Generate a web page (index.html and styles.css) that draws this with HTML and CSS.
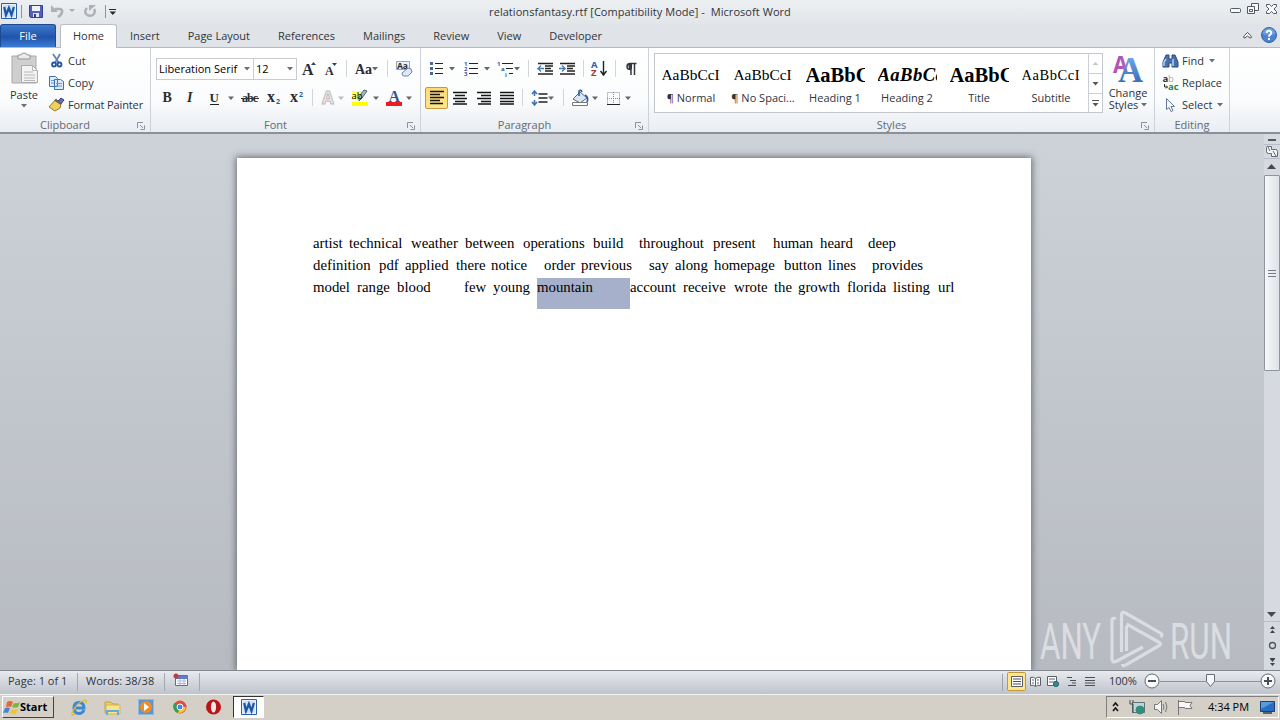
FILE: index.html
```html
<!DOCTYPE html>
<html lang="en">
<head>
<meta charset="utf-8">
<title>relationsfantasy.rtf - Microsoft Word</title>
<link rel="stylesheet" href="styles.css">
</head>
<body>
<svg width="0" height="0" class="defs">
  <defs>
    <linearGradient id="gb" x1="0" y1="0" x2="0" y2="1"><stop offset="0" stop-color="#7db4ec"/><stop offset="1" stop-color="#2c5fb3"/></linearGradient>
    <linearGradient id="gp" x1="0" y1="0" x2="1" y2="1"><stop offset="0" stop-color="#a84fc0"/><stop offset="1" stop-color="#b660a8"/></linearGradient>
    <symbol id="tri" viewBox="0 0 6 4"><path d="M0 0h6L3 3.5z" fill="#6b6f75"/></symbol>
    <symbol id="launch" viewBox="0 0 8 8"><path d="M.5 6V.5H6M3 3l3 3M7.5 3.5v4h-4" fill="none" stroke="#8c9299"/></symbol>
    <symbol id="word" viewBox="0 0 16 16"><path d="M.5.5h15v15H.5z" fill="#e9f2fb" stroke="#2b5fa8"/><path d="M2 2h12v12H2z" fill="#cfe1f5"/><path d="M3.200 4l1.800 8 2.900-7 2.600 7 2.400-8" fill="none" stroke="#1d57a5" stroke-width="2.300"/></symbol>
  </defs>
</svg>
<div class="screen">
  <header class="titlebar">
    <svg class="quick" width="122" height="24" viewBox="0 0 122 24">
      <use href="#word" x="1" y="3" width="16" height="16"/>
      <path d="M21.500 5v13M105.500 5v13" stroke="#8d9299"/>
      <path d="M29.500 5.500h13v12h-12l-1-1z" fill="#5560bd" stroke="#34409a"/><path d="M32 6h8v5h-8z" fill="#eef2fc"/><path d="M33 13h6v4h-6z" fill="#dfe3f3"/><path d="M34 14h2v3h-2z" fill="#333c8a"/>
      <path d="M55 9h4q4 0 3 3.500-1 3-4 4.500" fill="none" stroke="#adb0b4" stroke-width="2.600"/><path d="M51 5v7h7z" fill="#adb0b4"/>
      <path d="M69 9h6l-3 3z" fill="#a8abb0"/>
      <path d="M87 8q-3 3-1 6 3 3 7 1 3-3 1-6" fill="none" stroke="#adb0b4" stroke-width="2.400"/><path d="M89 5h7l-7 6z" fill="#adb0b4"/>
      <path d="M109 9.500h7" stroke="#26282b"/><path d="M109.500 11.500h6.500l-3.200 3.500z" fill="#26282b"/>
    </svg>
    <h1>relationsfantasy.rtf [Compatibility Mode] -&nbsp; Microsoft Word</h1>
    <svg class="winbtns" width="56" height="24" viewBox="1224 0 56 24" fill="#f6f8f9" stroke="#555b63">
      <rect x="1230.500" y="8.500" width="10" height="4" rx="1"/>
      <path d="M1251.500 3.500h7v7h-7z"/><path d="M1247.500 6.500h7v7h-7zM1249.500 9.500h3v2h-3z"/>
      <path d="M1266.500 4.500h3l2 2 2-2h3v2l-2.500 2.500 2.500 2.500v2h-3l-2-2-2 2h-3v-2l2.500-2.500-2.500-2.500z"/>
    </svg>
  </header>
  <nav class="tabs">
    <span class="tab file">File</span><span class="tab home">Home</span><span class="tab">Insert</span><span class="tab">Page Layout</span><span class="tab">References</span><span class="tab">Mailings</span><span class="tab">Review</span><span class="tab">View</span><span class="tab">Developer</span>
    <svg class="help" width="44" height="23" viewBox="1236 24 44 23"><path d="M1243.500 37q0-1 4-4.500 4 3.500 4 4.500t-1.500 1l-2.500-2-2.500 2q-1.500 0-1.500-1z" fill="#f6f8f9" stroke="#4b5058"/><circle cx="1269" cy="35" r="7.500" fill="#4c84d0" stroke="#2f62ac"/><path d="M1262.500 34a6.500 6 0 0 1 13 0q-6 2-13 0z" fill="#83b0e7" opacity=".6"/><path d="M1266.700 33q0-2.200 2.300-2.200t2.300 2q0 1.300-1.300 2-1 .6-1 1.900M1269 38v2" fill="none" stroke="#fff" stroke-width="1.900"/></svg>
  </nav>
  <section class="ribbon">
    <div class="group clipboard">
      <div class="body">
        <div class="paste"><svg width="32" height="36" viewBox="8 51 32 36"><path d="M12 56h24v27H12z" fill="#cfcfcf" stroke="#aaa"/><path d="M18 59v-4h3q0-2 3-2t3 2h3v4z" fill="#ececec" stroke="#999"/><path d="M21.500 65.500h11l5 5v12h-16z" fill="#f3f3f3" stroke="#aaa"/><path d="M32.500 65.500v5h5M24 72h9M24 75h11M24 78h11M24 80.500h11" fill="none" stroke="#b8b8b8"/></svg><span>Paste</span><svg class="arrow"><use href="#tri"/></svg></div>
        <div class="cmds">
          <div><svg width="18" height="18" viewBox="48 52 18 18"><path d="M53 54l6 9M60 54l-5 9" stroke="#6585ac" stroke-width="1.800"/><circle cx="54" cy="64.500" r="2" fill="none" stroke="#2755a5" stroke-width="1.800"/><circle cx="59.500" cy="64.500" r="2" fill="none" stroke="#2755a5" stroke-width="1.800"/></svg><span>Cut</span></div>
          <div><svg width="18" height="18" viewBox="48 74 18 18" fill="#dceafa" stroke="#3f72b5"><path d="M49.500 76.500h6l2 2v8h-8zM54.500 79.500h6l3 2v8h-9z"/><path d="M51 80.500h3M51 83h3M56 83.500h6M56 86h6" stroke="#6d99d0"/></svg><span>Copy</span></div>
          <div><svg width="18" height="18" viewBox="48 96 18 18"><path d="M61 98l3 2-4 5-3-3z" fill="#6a6fae" stroke="#373d71"/><path d="M56 99l5 5-1 4-5 3-6-4z" fill="#f0d05c" stroke="#9b7a28"/><path d="M55 100l6 4" stroke="#57606e" stroke-width="2"/></svg><span class="painter">Format Painter</span></div>
        </div>
      </div>
      <footer><span>Clipboard</span><svg class="launch"><use href="#launch"/></svg></footer>
    </div>
    <div class="group font">
      <div class="body rows">
        <div class="row">
          <div class="combo family"><span>Liberation Serif</span><svg class="arrow"><use href="#tri"/></svg></div><div class="combo size"><span>12</span><svg class="arrow"><use href="#tri"/></svg></div>
          <svg width="50" height="22" viewBox="297 58 50 22"><text x="302" y="75" class="serif b" font-size="16">A</text><path d="M311 65h5l-2.500-3z" fill="#345"/><text x="325" y="75" class="serif b" font-size="12">A</text><path d="M332 63h5l-2.500 3z" fill="#345"/><path d="M346.500 60v17" stroke="#d2d5d9"/></svg>
          <svg width="41" height="22" viewBox="347 58 41 22"><text x="355" y="74" class="serif b" font-size="14">Aa</text><path d="M372 67h6l-3 3.500z" fill="#666"/><path d="M387.500 60v17" stroke="#d2d5d9"/></svg>
          <svg width="30" height="22" viewBox="388 58 30 22"><path d="M396.500 61.500h13v8h-13z" fill="#e8f1fb" stroke="#93a4bb"/><text x="397" y="69" font-size="8.500" class="sans b">Aa</text><path d="M402 73l6-5q4 0 4 4l-4 4h-4q-2 0-2-3z" fill="#dbe9fa" stroke="#6b83aa"/></svg>
        </div>
        <div class="row">
          <svg width="82" height="22" viewBox="156 87 82 22"><text x="162.500" y="102" class="serif b" font-size="14">B</text><text x="187" y="102" class="serif bi" font-size="14">I</text><text x="209.500" y="102" class="serif b" font-size="13">U</text><path d="M210 104.500h9" stroke="#222"/><path d="M228 96.500h6l-3 3.500z" fill="#666"/></svg>
          <svg width="75" height="22" viewBox="238 87 75 22"><text x="242" y="102" class="serif b" font-size="12" textLength="16">abc</text><path d="M241 98.500h18" stroke="#333"/><text x="267" y="102" class="serif b" font-size="16">x</text><text x="276" y="104" class="sans num" font-size="7">2</text><text x="290" y="102" class="serif b" font-size="16">x</text><text x="299" y="97" class="sans num" font-size="7">2</text><path d="M312.500 89v17" stroke="#d2d5d9"/></svg>
          <svg width="34" height="22" viewBox="313 87 34 22"><text x="322" y="104" class="sans" font-size="17" font-weight="bold" fill="#eee" stroke="#bbb">A</text><path d="M338 96.500h6l-3 3.500z" fill="#bbb"/></svg>
          <svg width="35" height="22" viewBox="347 87 35 22"><path d="M352 91h10v9h-10z" fill="#ffff65"/><path d="M367 91l-5 7-3 3 0-4 5-7z" fill="#a9bad0" stroke="#4c607b"/><text x="351.500" y="99" class="sans" font-size="9.500">ab</text><path d="M352 102h16v4h-16z" fill="#ff0"/><path d="M373 96.500h6l-3 3.500z" fill="#666"/></svg>
          <svg width="35" height="22" viewBox="382 87 35 22"><text x="388.500" y="101.500" class="serif" font-size="16" font-weight="bold" fill="#35568a">A</text><path d="M386 102h16v4h-16z" fill="#ed1c24"/><path d="M406 96.500h6l-3 3.500z" fill="#666"/></svg>
        </div>
      </div>
      <footer><span>Font</span><svg class="launch"><use href="#launch"/></svg></footer>
    </div>
    <div class="group paragraph">
      <div class="body rows">
        <div class="row">
          <svg width="36" height="22" viewBox="425 58 36 22"><path d="M435 63.500h8M435 68.500h8M435 73.500h8" stroke="#222"/><path d="M430 62h3v3h-3zm0 5h3v3h-3zm0 5h3v3h-3z" fill="#47669c"/><path d="M449 67h6l-3 3.500z" fill="#666"/></svg>
          <svg width="35" height="22" viewBox="461 58 35 22"><path d="M469 63.500h9M469 68.500h9M469 73.500h9" stroke="#222"/><g class="sans num" font-size="6"><text x="464" y="66">1</text><text x="464" y="71">2</text><text x="464" y="76">3</text></g><path d="M484 67h6l-3 3.500z" fill="#666"/></svg>
          <svg width="35" height="22" viewBox="496 58 35 22"><path d="M502 63.500h11M506 68.500h7M509 73.500h4" stroke="#222"/><g class="sans num" font-size="6"><text x="497" y="66">1</text><text x="501" y="71">a</text><text x="505" y="77">i</text></g><path d="M514 67h6l-3 3.500z" fill="#666"/><path d="M528.500 60v17" stroke="#d2d5d9"/></svg>
          <svg width="54" height="22" viewBox="531 58 54 22"><path d="M538 63.500h15M545 66h8M545 68.500h6M545 71h8M538 74h15M560 63.500h15M567 66h8M567 68.500h6M567 71h8M560 74h15" stroke="#222" stroke-width="1.500"/><path d="M544 68.500h-6l3-3m-3 3l3 3M559 68.500h6l-3-3m3 3l-3 3" fill="none" stroke="#4779bd" stroke-width="1.300"/><path d="M583.500 60v17" stroke="#d2d5d9"/></svg>
          <svg width="58" height="22" viewBox="585 58 58 22"><text x="591" y="68" class="sans b num" font-size="9.500">A</text><text x="591" y="76" class="sans b red" font-size="9.500">Z</text><path d="M603.500 61v13m-3-3l3 4 3-4" fill="none" stroke="#222" stroke-width="1.400"/><path d="M615.500 60v17" stroke="#d2d5d9"/><path d="M636.500 63.500H630q-3 0-3 3t3 3h1v5.500M634.500 63.500V75" fill="none" stroke="#35393f" stroke-width="1.500"/><path d="M628 64h4v5h-3z" fill="#35393f"/></svg>
        </div>
        <div class="row">
          <span class="active"><svg width="23" height="20" viewBox="425 88 23 20"><path d="M430 91.500h14M430 94.500h10M430 97.500h14M430 100.500h10M430 103.500h13" stroke="#151515" stroke-width="1.400"/></svg></span>
          <svg width="77" height="22" viewBox="448 87 77 22"><path d="M453 92.500h14M455 95.500h10M453 98.500h14M455 101.500h10M453 104h14M477 92.500h14M481 95.500h10M477 98.500h14M481 101.500h10M478 104h13M500 92.500h14M500 95.500h14M500 98.500h14M500 101.500h14M500 104h14" stroke="#151515" stroke-width="1.400"/><path d="M522.500 89v17" stroke="#d2d5d9"/></svg>
          <svg width="40" height="22" viewBox="525 87 40 22"><path d="M538.500 94h9M538.500 98h9M538.500 102h9" stroke="#222" stroke-width="1.300"/><path d="M534.500 91v5m0 4v5m-2.500-11l2.500-3 2.500 3m-5 8l2.500 3 2.500-3" fill="none" stroke="#4574b3" stroke-width="1.600"/><path d="M548 96.500h6l-3 3.500z" fill="#666"/><path d="M563.500 89v17" stroke="#d2d5d9"/></svg>
          <svg width="70" height="22" viewBox="565 87 70 22"><path d="M573 99l7-7 7 6-7 5z" fill="#d9e7f5" stroke="#50698d"/><path d="M579 96v-5q2-2 3 1M585 95q4 2 2 7" fill="none" stroke="#315a98" stroke-width="1.600"/><path d="M572.500 102.500h15v3h-15z" fill="#fff" stroke="#777"/><path d="M592 96.500h6l-3 3.500z" fill="#666"/><path d="M607.500 92.500h12v12h-12zM613.500 92v12M607 98.500h13" fill="none" stroke="#889" stroke-dasharray="1 1"/><path d="M607 104.500h13" stroke="#222"/><path d="M625 96.500h6l-3 3.500z" fill="#666"/></svg>
        </div>
      </div>
      <footer><span>Paragraph</span><svg class="launch"><use href="#launch"/></svg></footer>
    </div>
    <div class="group styles">
      <div class="body">
        <div class="gallery">
          <div class="style"><b class="normal">AaBbCcI</b><span>¶ Normal</span></div>
          <div class="style"><b class="normal">AaBbCcI</b><span>¶ No Spaci...</span></div>
          <div class="style"><b class="h1">AaBbC</b><span>Heading 1</span></div>
          <div class="style"><b class="h2">AaBbCc</b><span>Heading 2</span></div>
          <div class="style"><b class="h1">AaBbC</b><span>Title</span></div>
          <div class="style"><b class="sub">AaBbCcI</b><span>Subtitle</span></div>
          <svg class="gscroll" width="14" height="58" viewBox="1088 54 14 58"><path d="M1088.500 54v58M1088 73.500h14M1088 93.500h14" stroke="#cbced2"/><path d="M1092.500 65h6l-3-3z" fill="#c4c7cb"/><path d="M1092.500 82h6l-3 3.500zM1092.500 103h6l-3 3.500z" fill="#555"/><path d="M1092 100.500h7" stroke="#555"/></svg>
        </div>
        <div class="change"><svg width="34" height="34" viewBox="1111 51 34 34"><text x="1113" y="73" class="sans" font-weight="bold" font-size="24" fill="url(#gp)" textLength="15" lengthAdjust="spacingAndGlyphs">A</text><text x="1118" y="82" class="serif" font-weight="bold" font-size="36" fill="url(#gb)" textLength="25" lengthAdjust="spacingAndGlyphs">A</text></svg><span>Change</span><span class="second">Styles<svg class="arrow"><use href="#tri"/></svg></span></div>
      </div>
      <footer><span>Styles</span><svg class="launch"><use href="#launch"/></svg></footer>
    </div>
    <div class="group editing">
      <div class="body cmds">
        <div><svg width="18" height="18" viewBox="1162 52 18 18"><path d="M1166 55h3v4h3v-4h3l3 7v5h-6v-4h-3v4h-6v-5z" fill="#4870ab" stroke="#294b82"/><path d="M1166 59l-2 3v4M1173 59v7" stroke="#b8d0f0" fill="none" stroke-width="1.500"/></svg><span>Find</span><svg class="arrow"><use href="#tri"/></svg></div>
        <div><svg width="18" height="18" viewBox="1162 74 18 18"><text x="1162.500" y="82" class="sans b" font-size="9.500">a</text><text x="1168" y="82" class="sans" font-size="9.500" fill="#aaa">b</text><text x="1168" y="90" class="sans" font-size="9.500" font-weight="bold" fill="#26824a">ac</text><path d="M1164.500 84v3h3m-1.500-1.500l1.500 1.500-1.500 1.500" fill="none" stroke="#333"/></svg><span>Replace</span></div>
        <div><svg width="18" height="18" viewBox="1162 96 18 18"><path d="M1166.500 98.500v11l2.500-2 2 4 2-1-2-4h3.500z" fill="#f4f8fd" stroke="#67799a"/></svg><span>Select</span><svg class="arrow"><use href="#tri"/></svg></div>
      </div>
      <footer class="plain"><span>Editing</span></footer>
    </div>
  </section>
  <main class="workspace">
    <article class="page">
      <p class="line l1"><span>artist</span><span>technical</span><span>weather</span><span>between</span><span>operations</span><span>build</span><span>throughout</span><span>present</span><span>human</span><span>heard</span><span>deep</span></p>
      <p class="line l2"><span>definition</span><span>pdf</span><span>applied</span><span>there</span><span>notice</span><span>order</span><span>previous</span><span>say</span><span>along</span><span>homepage</span><span>button</span><span>lines</span><span>provides</span></p>
      <p class="line l3"><span>model</span><span>range</span><span>blood</span><span>few</span><span>young</span><mark>mountain</mark><span>account</span><span>receive</span><span>wrote</span><span>the</span><span>growth</span><span>florida</span><span>listing</span><span>url</span></p>
    </article>
    <aside class="scroll">
      <svg width="16" height="41" viewBox="1264 134 16 41"><path d="M1268 140h8" stroke="#555b65" stroke-width="2"/><path d="M1264 144.500h16M1264 158.500h16" stroke="#b9bdc5"/><path d="M1266.500 147.500q0-2 2-1h3v3h4q2 0 2 2v5h-6v-3h-3q-2 0-2-2zM1268 147l2 4M1273 151l3 5" fill="#f4f5f7" stroke="#656b75"/><path d="M1267 169h9l-4.500-5z" fill="#444952"/></svg>
      <div class="thumb"><svg width="8" height="7"><path d="M0 .5h8M0 3.500h8M0 6.500h8" stroke="#777d87"/></svg></div>
      <svg class="navend" width="16" height="62" viewBox="1264 608 16 62"><path d="M1267 612h9l-4.500 5z" fill="#444952"/><path d="M1264 621.500h16" stroke="#b9bdc5"/><path d="M1270 629h5l-2.500-3zM1270 633h5l-2.500-3zM1270 659h5l-2.500 3zM1270 663h5l-2.500 3zM1270 658h5v1h-5z" fill="#3f444c"/><circle cx="1272.500" cy="645.500" r="3" fill="none" stroke="#50565f" stroke-width="1.300"/></svg>
    </aside>
    <svg class="watermark" width="196" height="64" viewBox="1038 608 196 64"><g class="wm" font-size="50"><text x="1040" y="659" textLength="61" lengthAdjust="spacingAndGlyphs">ANY</text><text x="1170" y="659" textLength="62" lengthAdjust="spacingAndGlyphs">RUN</text></g><path d="M1116 618.500q-4-1-4 2V659q0 4 4 2.500L1143 647M1121.500 652v-37q0-4 4-2l35 20q3 2 0 4M1126.500 624l32 18q4 2 0 4l-33 19q-3 2-3-1M1126.500 651v-25" fill="none" stroke="#f2f4f7" stroke-width="3.200" opacity=".6"/></svg>
  </main>
  <div class="status">
    <span class="cell c1">Page: 1 of 1</span><span class="cell c2">Words: 38/38</span><span class="cell c3"><svg width="18" height="16" viewBox="172 673 18 16"><path d="M175.500 675.500h12v10h-12z" fill="#fff" stroke="#596bb0"/><path d="M176 676h12v3h-12z" fill="#6679c4"/><path d="M177 681h9M177 683.500h9M180 679v6M184 679v6" stroke="#a9b5db"/><circle cx="176" cy="676" r="2.500" fill="#bb3f3a"/></svg></span>
    <svg class="views" width="106" height="24" viewBox="1000 671 106 24"><path d="M1002.500 674v17" stroke="#9ca0a8"/><rect x="1007.500" y="672.500" width="18" height="18" rx="1" fill="#ffe58c" stroke="#c4963a"/><path d="M1011.500 676.500h11v10h-11z" fill="#fff" stroke="#5c5d61"/><path d="M1013 679h8M1013 681.500h8M1013 684h8" stroke="#4b4f57"/><path d="M1030.500 677.500q3-1 5 1 2-2 5-1v8q-3-1-5 1-2-2-5-1zM1035.500 678v8" fill="#fff" stroke="#5b6068"/><path d="M1032 680h2M1032 683h2M1037 680h2M1037 683h2" stroke="#5b6068"/><path d="M1047.500 676.500h9v9h-9z" fill="#fff" stroke="#5b6068"/><path d="M1049 679h6M1049 682h6" stroke="#5b6068"/><circle cx="1056" cy="684" r="2.600" fill="#368c8b" stroke="#27607c"/><path d="M1067 677.500h5M1070 680.500h6M1072 683h4M1068 685.500h8M1085 677.500h10M1085 680.500h10M1085 683h10M1085 685.500h10" stroke="#4b4f57"/></svg>
    <span class="pct">100%</span>
    <svg width="138" height="24" viewBox="1142 671 138 24"><path d="M1160 681.500h101" stroke="#8e939b"/><circle cx="1152" cy="681" r="7" fill="#f8f9fa" stroke="#656a72"/><circle cx="1268" cy="681" r="7" fill="#f8f9fa" stroke="#656a72"/><path d="M1148 681h8M1264 681h8M1268 677v8" stroke="#4a4e55" stroke-width="2"/><path d="M1206.500 674.500h8v7l-4 5-4-5z" fill="#f6f7f9" stroke="#686d75"/></svg>
  </div>
  <footer class="taskbar">
    <div class="start"><svg width="17" height="17" viewBox="3 698 17 17"><path d="M7 701q3-2 6 0l-2 5q-2-1-5 0z" fill="#e5673a"/><path d="M14 702q3 1 6-1l-2 5q-3 1-6 0z" fill="#78b541"/><path d="M5 707q3-1 5 0l-2 5q-2-1-5 0z" fill="#4785cf"/><path d="M12 708q3 1 6 0l-2 5q-3 1-6-1z" fill="#f3c334"/></svg><span>Start</span></div>
    <svg class="apps" width="178" height="24" viewBox="54 696 178 24"><path d="M85 710q-1.500 3.500-5 3.500-5 0-5-5.500t5-5.500 5 5.500H77" fill="none" stroke="#3a8bd4" stroke-width="3"/><path d="M73 713q-1 3 3 1M73 713q5-11 13-13 2 0 1 3" fill="none" stroke="#e4b82c" stroke-width="1.200"/>
      <path d="M106 702h6l2 2h5v9h-13z" fill="#ebc963" stroke="#c2a246"/><path d="M107 705h14v9h-14z" fill="#f8e391" stroke="#d4b45c"/><path d="M108 715v-4h11v4" fill="none" stroke="#68abd3" stroke-width="2"/>
      <path d="M139.500 699.500h15v15h-15z" fill="#5797d5" stroke="#8fb9dd"/><circle cx="147" cy="707" r="6" fill="#f28b21"/><path d="M145 703l5 4-5 4z" fill="#fff"/>
      <circle cx="181" cy="707" r="6.500" fill="#e44b3b"/><path d="M181 707l-6-4a7 7 0 0 0 4 10z" fill="#2ba351"/><path d="M181 707h6a7 7 0 0 1-8 6z" fill="#f6c72c"/><circle cx="181" cy="707" r="3" fill="#4687e2" stroke="#fff"/>
      <circle cx="214.500" cy="707" r="7.500" fill="#b91519"/><ellipse cx="214.500" cy="707" rx="2.600" ry="5.500" fill="#f0e9e5"/></svg>
    <div class="running"><svg width="16" height="16"><use href="#word"/></svg></div>
    <div class="tray"><svg width="88" height="20" viewBox="1107 697 88 20"><path d="M1113 706l2.500-3 2.500 3M1113 711l2.500-3 2.500 3" fill="none" stroke="#151515" stroke-width="1.600"/><path d="M1132.500 702.500h12v10h-12z" fill="#b7d8db" stroke="#637176"/><path d="M1130 700v4h3v9M1133 700v3" stroke="#484848" fill="none"/><circle cx="1140" cy="710" r="4" fill="#299479" stroke="#4d7d80"/><path d="M1154.500 704.500h3l4-4v13l-4-4h-3z" fill="#f5f5f5" stroke="#777"/><path d="M1163 704q2 3 0 6M1165.500 702q3 5 0 10" fill="none" stroke="#777"/><path d="M1178.500 700v15M1179 701.500h5l2 1h6l-2 3 2 3h-6l-2-1h-5" fill="#f8f8f8" stroke="#777"/></svg><time>4:34 PM</time><svg width="18" height="18" viewBox="1260 698 18 18"><path d="M1261.500 701.500h14v10h-14z" fill="#286dc0" stroke="#194178"/><path d="M1262 702h13l-13 7z" fill="#5999de"/><path d="M1264 713h9" stroke="#59616d" stroke-width="2"/></svg></div>
  </footer>
</div>
</body>
</html>
```

FILE: styles.css
```css
* { box-sizing: border-box; }
body { margin: 0; font: 11px/14px "Open Sans", "Noto Sans", sans-serif; color: #30343a; }
svg { display: block; flex: none; }
.defs { position: absolute; }
.screen { width: 1280px; height: 720px; overflow: hidden; display: flex; flex-direction: column; background: #dfe3e6; white-space: nowrap; }
.titlebar { height: 24px; display: grid; grid-template-columns: 1fr 304px 1fr; align-items: center; background: linear-gradient(#edf0f3, #e2e6e9); }
.titlebar h1 { margin: 0; font-size: 11px; font-weight: 400; letter-spacing: .05px; text-align: center; }
.winbtns { justify-self: end; }
.tabs { height: 24px; display: flex; align-items: stretch; background: #e0e4e8; border-bottom: 1px solid #b5bac1; }
.tab { padding: 5px 14px 0; }
.file { width: 56px; padding: 4px 0 0; text-align: center; color: #fff; background: linear-gradient(#3d78cb, #2054ac 55%, #3b7cd4); border: 1px solid #1e4a94; border-bottom: 0; border-radius: 3px 3px 0 0; }
.home { width: 57px; height: 24px; margin: 0 -1px 0 4px; padding: 4px 0 0; text-align: center; background: #fff; border: 1px solid #b9bec5; border-bottom: 0; border-radius: 3px 3px 0 0; }
.help { margin-left: auto; }
.ribbon { height: 86px; display: flex; background: linear-gradient(#fff, #fbfcfd 60%, #e9edf2); border-bottom: 2px solid #8b9098; }
.group { display: flex; flex-direction: column; border-right: 1px solid #cdd2d9; }
.clipboard { width: 151px; }
.font { width: 270px; }
.paragraph { width: 228px; }
.styles { width: 506px; }
.editing { width: 75px; }
.body { height: 69px; display: flex; }
.group footer { display: grid; grid-template-columns: 1fr 13px; color: #646a73; text-align: center; line-height: 15px; }
.group footer span { padding-right: 7px; }
.group .plain { grid-template-columns: 1fr; }
.group .plain span { padding: 0; }
.launch { width: 8px; height: 8px; margin-top: 5px; }
.arrow { width: 6px; height: 4px; }
.paste { width: 48px; display: flex; flex-direction: column; align-items: center; padding-top: 3px; }
.paste span { margin: 1px 0 2px; }
.painter { letter-spacing: -.12px; }
.cmds { display: flex; flex-direction: column; gap: 4px; padding-top: 4px; }
.cmds > div { display: flex; align-items: center; height: 18px; gap: 2px; }
.cmds .arrow { margin-left: 3px; }
.editing .cmds, .editing .body { padding-left: 7px; }
.rows { flex-direction: column; gap: 7px; padding: 10px 0 0 5px; }
.paragraph .rows { padding-left: 4px; }
.row { display: flex; height: 22px; }
.combo { height: 22px; border: 1px solid #c8ccd1; display: flex; align-items: center; justify-content: space-between; background: #fff; padding: 0 3px 0 2px; color: #000; }
.family { width: 98px; }
.size { width: 43px; border-left: 0; }
.active { width: 23px; height: 22px; border: 1px solid #c29a3e; border-radius: 2px; background: linear-gradient(#ffda72, #ffe589); display: flex; justify-content: center; }
.serif { font-family: "Liberation Serif", serif; }
.sans { font-family: "Open Sans", sans-serif; }
.b, .bi { font-weight: 700; fill: #2a2d31; }
.bi { font-style: italic; }
.num { fill: #2e5ba8; font-weight: 700; }
.red { fill: #a43b36; }
.styles .body { padding: 5px 0 0 5px; }
.gallery { width: 449px; height: 60px; display: flex; border: 1px solid #c3c7cc; background: #fff; }
.style { width: 72px; display: flex; flex-direction: column; align-items: center; padding-top: 9px; }
.style b { width: 59px; height: 24px; overflow: hidden; line-height: 24px; color: #000; font-family: "Liberation Serif", serif; }
.style span { margin-top: 4px; }
.style .normal { font-size: 15.400px; font-weight: 400; }
.h1 { font-size: 20.500px; }
.style .h2 { font-size: 18.700px; font-style: italic; letter-spacing: .4px; }
.style .sub { font-size: 14.500px; font-weight: 400; letter-spacing: .55px; }
.gscroll { margin-left: auto; }
.change { width: 50px; display: flex; flex-direction: column; align-items: center; margin-top: -2px; }
.change span { line-height: 13px; margin-top: 1px; }
.change .second { display: flex; align-items: center; gap: 3px; margin: -1px 0 0; }
.workspace { height: 536px; position: relative; display: flex; justify-content: space-between; background: linear-gradient(#cdd1d8, #b7bac1); }
.page { width: 794px; height: 512px; margin: 24px 0 0 237px; padding: 74px 0 0 76px; background: #fff; box-shadow: 0 0 7px 1px #666970; color: #000; font: 14.800px/22px "Liberation Serif", serif; clip-path: inset(-10px -10px 0); }
.line { margin: 0; height: 22px; display: grid; }
.l1 { grid-template-columns: 36px 62px 54px 58px 70px 46px 74px 60px 47px 48px 50px; }
.l2 { grid-template-columns: 66px 26px 51px 35px 53px 37px 68px 26px 39px 70px 44px 44px 60px; }
.l3 { grid-template-columns: 44px 40px 67px 29px 44px 93px 53px 51px 40px 24px 49px 46px 45px 20px; }
.line mark { height: 31px; margin-top: 2px; line-height: 18px; background: #a6b0cb; color: #000; }
.scroll { width: 16px; display: flex; flex-direction: column; background: #d6d9df; }
.thumb { height: 196px; border: 1px solid #8f959f; border-radius: 1px; background: linear-gradient(90deg, #f7f8fa, #dfe2e7); display: grid; place-items: center; }
.navend { margin-top: auto; }
.watermark { position: absolute; left: 1038px; top: 474px; }
.wm { font-family: Roboto, sans-serif; font-weight: 400; fill: #f2f4f7; opacity: .6; }
.status { height: 25px; display: flex; background: linear-gradient(#e7eaee, #bfc3cb); border-top: 1px solid #81868f; border-bottom: 1px solid #f2f2f0; line-height: 20px; }
.cell { border-right: 1px solid #a3a8b0; margin: 2px 0 3px; line-height: 16px; }
.c1 { width: 78px; padding-left: 8px; }
.c2 { width: 87px; padding-left: 8px; }
.c3 { width: 35px; padding-left: 7px; }
.views { margin-left: auto; }
.pct { width: 36px; padding-left: 3px; }
.taskbar { height: 25px; display: flex; background: #d4d0c8; }
.start { width: 52px; height: 22px; margin: 1px 0 0 2px; border: 1px solid; border-color: #fff #444 #444 #fff; display: flex; align-items: center; color: #000; font: bold 11px/18px "Open Sans", sans-serif; }
.apps { margin: 1px 0 0 -1px; }
.running { width: 31px; height: 22px; margin: 1px 0 0 2px; display: grid; place-items: center; background: #fff; border: 1px solid; border-color: #333 #fff #fff #333; }
.tray { width: 173px; height: 22px; margin: 1px 1px 0 auto; border: 1px solid; border-color: #808080 #fff #fff #808080; display: grid; grid-template-columns: 88px 1fr 19px; align-items: center; color: #000; }
.tray time { padding-left: 13px; }
```
